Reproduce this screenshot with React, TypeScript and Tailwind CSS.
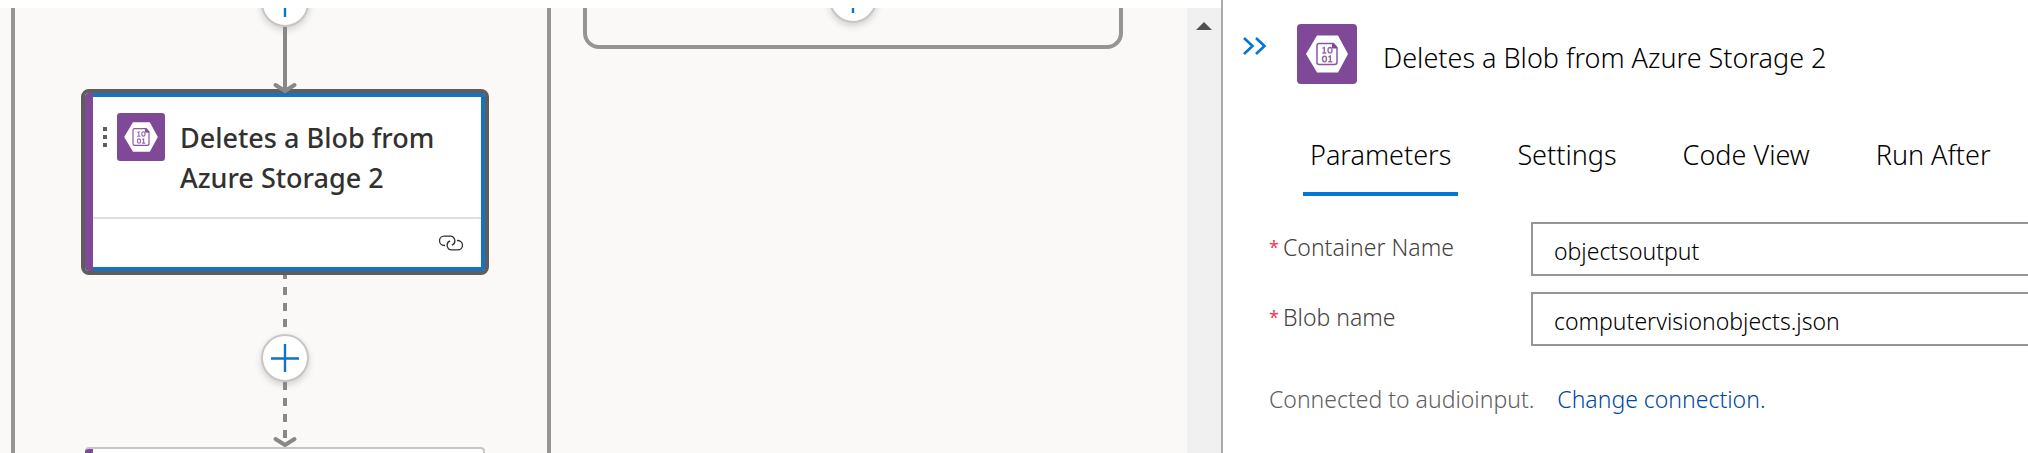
import React, { useState } from "react";

function BlobIcon({ className }: { className: string }) {
  return (
    <svg viewBox="0 0 60 60" className={className} aria-hidden="true">
      <rect width="60" height="60" rx="4" fill="#804998" />
      <path d="M20 11.5h21l10 18.5-10 18.5H20L9 30z" fill="#fff" />
      <path
        d="M22 19.5h14.5l3.500 4V38a2.500 2.500 0 0 1-2.500 2.500H22a2 2 0 0 1-2-2v-17a2 2 0 0 1 2-2z"
        fill="#fff"
        stroke="#8a58a2"
        strokeWidth="1.500"
      />
      <path d="M35.500 19.500v4.500h4.500z" fill="#804998" stroke="#804998" />
      <g fill="none" stroke="#9468aa" strokeWidth="1.400">
        <path d="M25.500 24.300l1.800-.8v5.500M25.300 29h4" />
        <ellipse cx="33" cy="26.200" rx="2" ry="2.700" />
        <ellipse cx="27.500" cy="35" rx="2" ry="2.700" />
        <path d="M31.500 33l1.800-.8v5.500M31.300 37.700h4" />
      </g>
    </svg>
  );
}

function AddButton({ className = "", label }: { className?: string; label: string }) {
  return (
    <button
      type="button"
      aria-label={label}
      className={`flex size-12 shrink-0 items-center justify-center rounded-full border-2 border-[#c8c6c4] bg-white shadow-[0_3px_7px_rgba(0,0,0,0.16)] ${className}`}
    >
      <svg viewBox="0 0 28 28" className="size-7" fill="none" stroke="#0f73c9" strokeWidth="2.400">
        <path d="M14 0v28M0 14.500h28" />
      </svg>
    </button>
  );
}

function Connector({ length, dash, arrow, className }: { length: number; dash?: string; arrow?: number; className: string }) {
  return (
    <svg viewBox={`0 0 24 ${length}`} className={`relative z-10 w-6 shrink-0 overflow-visible ${className}`} fill="none" stroke="#8a8886" strokeWidth="4" aria-hidden="true">
      <path d={`M12 0V${arrow ? arrow - 2 : length}`} strokeDasharray={dash} />
      {arrow && <path d={`M2.500 ${arrow - 8}L12 ${arrow - 2}l9.500-6`} strokeLinecap="round" strokeLinejoin="round" />}
    </svg>
  );
}

function ActionCard() {
  return (
    <article className="flex w-[408px] shrink-0 overflow-hidden rounded-lg border-4 border-[#605e5c] bg-white">
      <div className="w-2 shrink-0 bg-[#804998]" />
      <div className="min-w-0 flex-1 border-y-4 border-r-4 border-[#1374c4]">
        <div className="flex h-[120px] pt-4 pl-[10px]">
          <svg viewBox="0 0 4 20" className="mt-[14px] h-5 w-1 shrink-0" fill="#605e5c" aria-hidden="true">
            <path d="M0 0h4v4H0zM0 8h4v4H0zM0 16h4v4H0z" />
          </svg>
          <BlobIcon className="ml-[10px] size-12 shrink-0" />
          <h2 className="ml-[15px] pt-[5px] text-[27px] leading-10 font-medium whitespace-nowrap text-[#323130]">
            Deletes a Blob from
            <br />
            Azure Storage 2
          </h2>
        </div>
        <div className="flex h-[50px] items-center justify-end border-t-2 border-[#e1dfdd] pr-[18px]">
          <svg viewBox="0 0 24 16" className="h-4 w-6" fill="none" stroke="#323130" strokeWidth="1.300" aria-label="Connection">
            <path d="M6 10.500H5.200A4.700 4.700 0 0 1 5.200 1.100h6.100a4.700 4.700 0 0 1 1.700 9" />
            <path d="M18 5.500h.800a4.700 4.700 0 0 1 0 9.400h-6.100a4.700 4.700 0 0 1-1.700-9" />
          </svg>
        </div>
      </div>
    </article>
  );
}

function Canvas() {
  return (
    <section aria-label="Designer" className="mt-2 flex min-w-0 overflow-hidden bg-[#faf9f8]">
      <div className="ml-[11px] flex w-[540px] shrink-0 flex-col items-center border-x-4 border-[#979593] pl-2">
        <AddButton className="-mt-[29px]" label="Insert step above" />
        <Connector length={62} arrow={66} className="h-[62px]" />
        <ActionCard />
        <Connector length={59} dash="4 8 8 8 8 8 8 20" className="h-[59px]" />
        <AddButton label="Insert step below" />
        <Connector length={65} dash="8 8" arrow={65} className="h-[65px]" />
        <div className="flex min-h-[6px] w-[400px] flex-1 overflow-hidden rounded-t border-t-2 border-r-2 border-[#c8c6c4] bg-white">
          <div className="w-2 bg-[#804998]" />
        </div>
      </div>
      <div className="ml-8 flex h-[41px] w-[540px] shrink-0 justify-center rounded-b-2xl border-4 border-t-0 border-[#979593]">
        <AddButton className="-mt-[33px]" label="Insert step in branch" />
      </div>
      <div className="ml-auto w-[34px] shrink-0 bg-[#f0f0f0] pt-[14px] pl-[9px]">
        <svg viewBox="0 0 16 8" className="h-2 w-4" fill="#505050" aria-hidden="true">
          <path d="M8 0l8 8H0z" />
        </svg>
      </div>
    </section>
  );
}

const tabs = ["Parameters", "Settings", "Code View", "Run After"];

function Field({ id, label, value }: { id: string; label: string; value: string }) {
  const [text, setText] = useState(value);
  return (
    <div className="flex">
      <label htmlFor={id} className="flex w-[262px] shrink-0 gap-[5px] pt-[9px] leading-8 text-[#444240]">
        <span className="w-[9px] text-[18px] leading-8 font-normal text-[#e0405a]">*</span>
        {label}
      </label>
      <input
        id={id}
        value={text}
        onChange={(e) => setText(e.target.value)}
        className="h-[54px] min-w-0 flex-1 border-2 border-r-0 border-[#979593] bg-white pt-1 pl-[21px] text-black outline-none"
      />
    </div>
  );
}

function Panel() {
  const [active, setActive] = useState("Parameters");
  return (
    <aside className="min-w-0 overflow-hidden border-l-2 border-[#ababab] bg-white font-light">
      <header className="flex pt-6 pl-5">
        <button type="button" aria-label="Collapse panel" className="mt-[13px] h-[18px] w-6 shrink-0">
          <svg viewBox="0 0 24 18" className="h-[18px] w-6" fill="none" stroke="#0078d4" strokeWidth="2.600">
            <path d="M1 1l8.500 8L1 17M13 1l8.500 8-8.500 8" />
          </svg>
        </button>
        <BlobIcon className="ml-[30px] size-[60px] shrink-0" />
        <h1 className="ml-[26px] pt-[14px] text-[27px] leading-10 whitespace-nowrap text-black">Deletes a Blob from Azure Storage 2</h1>
      </header>
      <div role="tablist" className="mt-[50px] ml-20 flex gap-[52px]">
        {tabs.map((tab) => (
          <button
            key={tab}
            type="button"
            role="tab"
            aria-selected={tab === active}
            onClick={() => setActive(tab)}
            className={`h-[62px] shrink-0 border-b-4 px-[7px] pb-4 text-[27px] leading-10 text-black ${tab === active ? "border-[#0078d4]" : "border-transparent"}`}
          >
            {tab}
          </button>
        ))}
      </div>
      <form className="mt-[26px] flex flex-col gap-4 pl-[46px] text-[23px]">
        <Field id="container-name" label="Container Name" value="objectsoutput" />
        <Field id="blob-name" label="Blob name" value="computervisionobjects.json" />
      </form>
      <p className="mt-[37px] flex gap-[23px] pl-[46px] text-[23px] leading-8 whitespace-nowrap text-[#605e5c]">
        <span>Connected to audioinput.</span>
        <a href="#connection" className="text-[#0048a0]">
          Change connection.
        </a>
      </p>
    </aside>
  );
}

export default function App() {
  return (
    <main className="grid min-h-screen grid-cols-[minmax(0,1221fr)_minmax(0,807fr)] bg-white font-['Noto_Sans','Open_Sans',sans-serif]">
      <Canvas />
      <Panel />
    </main>
  );
}
